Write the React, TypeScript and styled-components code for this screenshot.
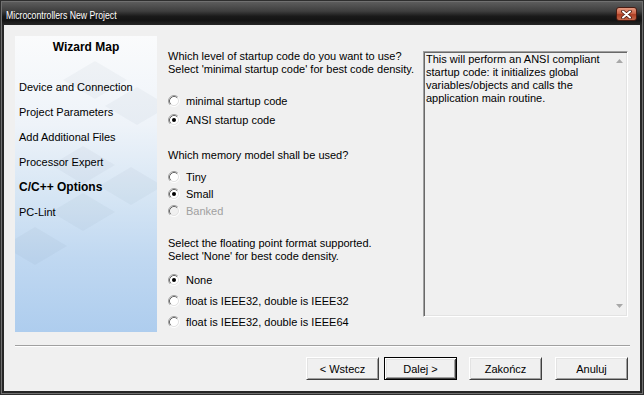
import React from "react";
import styled, { createGlobalStyle } from "styled-components";

const Global = createGlobalStyle`
  html, body { margin: 0; padding: 0; background: #2a2a2a; }
  body { font-family: "Liberation Sans", Arial, sans-serif; font-size: 11px; color: #000; }
  * { box-sizing: border-box; }
`;

const Window = styled.div`
  width: 644px;
  height: 395px;
  border: 1px solid #2e2e2e;
  background: #2e2e2e;
`;

const Frame = styled.div`
  width: 100%;
  height: 100%;
  border: 1px solid #707070;
  background: #262626;
  display: flex;
  flex-direction: column;
`;

const TitleBar = styled.div`
  height: 23px;
  flex-shrink: 0;
  display: flex;
  align-items: center;
  justify-content: space-between;
  padding: 0 5px 0 4px;
  background: linear-gradient(to bottom, #5c5c5c 0%, #3e3e3e 40%, #1a1a1a 62%, #141414 80%, #262626 100%);
`;

const TitleText = styled.span`
  color: #fff;
  font-family: "Liberation Sans", Arial, sans-serif;
  font-size: 11px;
  margin-top: 3px;
  transform: scaleX(0.79);
  transform-origin: left center;
  white-space: nowrap;
`;

const CloseButton = styled.div`
  width: 21px;
  height: 14px;
  margin-top: 1px;
  border: 1px solid #4a1c12;
  border-radius: 3px;
  background: linear-gradient(to bottom, #e59a80 0%, #cc6448 45%, #ad3f25 55%, #c4684b 100%);
  display: flex;
  align-items: center;
  justify-content: center;
`;

const Client = styled.div`
  flex: 1;
  margin: 0 2px 2px;
  background: #f0f0f0;
  display: flex;
  flex-direction: column;
`;

const Body = styled.div`
  display: flex;
  padding: 11px 0 0 11px;
  height: 307px;
`;

const WizardPanel = styled.div`
  position: relative;
  width: 142px;
  height: 296px;
  flex-shrink: 0;
  overflow: hidden;
  padding-top: 4px;
  background: linear-gradient(to bottom, #fafbfc 0%, #eef3f9 30%, #d5e5f4 55%, #c0d8f1 75%, #aecdee 100%);
`;

const Watermark = styled.svg`
  position: absolute;
  left: 0;
  top: 0;
  z-index: 0;
`;

const MapTitle = styled.div`
  position: relative;
  z-index: 1;
  text-align: center;
  font-size: 12px;
  font-weight: bold;
  line-height: 14px;
`;

const MapList = styled.div`
  position: relative;
  z-index: 1;
  margin-top: 21px;
  display: flex;
  flex-direction: column;
`;

const MapItem = styled.div<{ $active?: boolean }>`
  height: 25px;
  line-height: 25px;
  padding-left: 4px;
  font-size: ${(p) => (p.$active ? "12px" : "11px")};
  font-weight: ${(p) => (p.$active ? "bold" : "normal")};
  white-space: nowrap;
`;

const Options = styled.div`
  width: 255px;
  margin-left: 11px;
  padding-top: 14px;
  display: flex;
  flex-direction: column;
`;

const Question = styled.div<{ $mt?: number }>`
  line-height: 13px;
  margin-top: ${(p) => p.$mt ?? 0}px;
  white-space: nowrap;
`;

const Group = styled.div<{ $mt: number }>`
  margin-top: ${(p) => p.$mt}px;
  display: flex;
  flex-direction: column;
`;

const RadioRow = styled.div<{ $h: number; $disabled?: boolean }>`
  height: ${(p) => p.$h}px;
  display: flex;
  align-items: center;
  gap: 6px;
  color: ${(p) => (p.$disabled ? "#a0a0a0" : "#000")};
  white-space: nowrap;
`;

const RadioSvg = styled.svg`
  flex-shrink: 0;
`;

const InfoBox = styled.div`
  margin-top: 15px;
  width: 205px;
  height: 266px;
  border: 1px solid;
  border-color: #a0a0a0 #ffffff #ffffff #a0a0a0;
  box-shadow: inset 1px 1px 0 #696969, inset -1px -1px 0 #e3e3e3;
  padding: 1px;
  display: flex;
`;

const InfoText = styled.div`
  flex: 1;
  padding-left: 1px;
  line-height: 13px;
`;

const InfoLine = styled.div`
  white-space: nowrap;
`;

const ScrollBar = styled.div`
  width: 12px;
  margin-right: 1px;
  display: flex;
  flex-direction: column;
  justify-content: space-between;
  align-items: center;
  padding: 6px 0 7px;
`;

const Separator = styled.div`
  margin: 13px 10px 0 11px;
  border-top: 1px solid #a0a0a0;
  border-bottom: 1px solid #ffffff;
`;

const ButtonRow = styled.div`
  display: flex;
  justify-content: flex-end;
  margin-top: 10px;
  padding-right: 12px;
`;

const Button = styled.div<{ $default?: boolean; $ml?: number }>`
  width: 73px;
  height: 23px;
  margin-left: ${(p) => p.$ml ?? 0}px;
  display: flex;
  align-items: center;
  justify-content: center;
  background: #f0f0f0;
  font-size: 11px;
  white-space: nowrap;
  border: 1px solid;
  border-color: ${(p) => (p.$default ? "#000 #000 #000 #000" : "#fff #404040 #404040 #fff")};
  box-shadow: ${(p) =>
    p.$default
      ? "inset 1px 1px 0 #fff, inset -1px -1px 0 #404040, inset 2px 2px 0 #e3e3e3, inset -2px -2px 0 #a0a0a0"
      : "inset 1px 1px 0 #e3e3e3, inset -1px -1px 0 #a0a0a0"};
`;

const Radio: React.FC<{ checked?: boolean; disabled?: boolean }> = ({ checked, disabled }) => (
  <RadioSvg width="12" height="12" viewBox="0 0 12 12">
    <circle cx="6" cy="6" r="4.2" fill={disabled ? "#f0f0f0" : "#ffffff"} />
    <path d="M2.11 9.89A5.5 5.5 0 0 1 9.89 2.11" stroke="#a0a0a0" fill="none" />
    <path d="M9.89 2.11A5.5 5.5 0 0 1 2.11 9.89" stroke="#ffffff" fill="none" />
    <path d="M2.82 9.18A4.5 4.5 0 0 1 9.18 2.82" stroke="#696969" fill="none" />
    <path d="M9.18 2.82A4.5 4.5 0 0 1 2.82 9.18" stroke="#e3e3e3" fill="none" />
    {checked && <circle cx="6" cy="6" r="2" fill={disabled ? "#a0a0a0" : "#000"} />}
  </RadioSvg>
);

const Arrow: React.FC<{ up?: boolean }> = ({ up }) => (
  <svg width="7" height="4" viewBox="0 0 7 4">
    <polygon points={up ? "0,4 7,4 3.5,0" : "0,0 7,0 3.5,4"} fill="#a8a8a8" />
  </svg>
);

const rhombi: [number, number][] = [
  [80, 44],
  [122, 70],
  [68, 129],
  [116, 150],
  [68, 176],
  [20, 210],
];

const mapItems = [
  "Device and Connection",
  "Project Parameters",
  "Add Additional Files",
  "Processor Expert",
  "C/C++ Options",
  "PC-Lint",
];

export default function App() {
  return (
    <>
      <Global />
      <Window>
        <Frame>
          <TitleBar>
            <TitleText>Microcontrollers New Project</TitleText>
            <CloseButton>
              <svg width="11" height="9" viewBox="0 0 11 9">
                <path d="M2 1.5L9 7.5M9 1.5L2 7.5" stroke="#4a1c12" strokeWidth="3.6" strokeLinecap="round" />
                <path d="M2 1.5L9 7.5M9 1.5L2 7.5" stroke="#ffffff" strokeWidth="2" strokeLinecap="round" />
              </svg>
            </CloseButton>
          </TitleBar>
          <Client>
            <Body>
              <WizardPanel>
                <Watermark width="142" height="296" viewBox="0 0 142 296">
                  {rhombi.map(([cx, cy], i) => (
                    <polygon
                      key={i}
                      points={`${cx - 32},${cy} ${cx},${cy - 19} ${cx + 32},${cy} ${cx},${cy + 19}`}
                      fill="rgba(80,95,120,0.045)"
                    />
                  ))}
                </Watermark>
                <MapTitle>Wizard Map</MapTitle>
                <MapList>
                  {mapItems.map((m) => (
                    <MapItem key={m} $active={m === "C/C++ Options"}>
                      {m}
                    </MapItem>
                  ))}
                </MapList>
              </WizardPanel>
              <Options>
                <Question>
                  Which level of startup code do you want to use?
                  <br />
                  Select 'minimal startup code' for best code density.
                </Question>
                <Group $mt={15}>
                  <RadioRow $h={19}>
                    <Radio />
                    minimal startup code
                  </RadioRow>
                  <RadioRow $h={19}>
                    <Radio checked />
                    ANSI startup code
                  </RadioRow>
                </Group>
                <Question $mt={20}>Which memory model shall be used?</Question>
                <Group $mt={6}>
                  <RadioRow $h={17}>
                    <Radio />
                    Tiny
                  </RadioRow>
                  <RadioRow $h={17}>
                    <Radio checked />
                    Small
                  </RadioRow>
                  <RadioRow $h={17} $disabled>
                    <Radio disabled />
                    Banked
                  </RadioRow>
                </Group>
                <Question $mt={18}>
                  Select the floating point format supported.
                  <br />
                  Select 'None' for best code density.
                </Question>
                <Group $mt={6}>
                  <RadioRow $h={21}>
                    <Radio checked />
                    None
                  </RadioRow>
                  <RadioRow $h={21}>
                    <Radio />
                    float is IEEE32, double is IEEE32
                  </RadioRow>
                  <RadioRow $h={21}>
                    <Radio />
                    float is IEEE32, double is IEEE64
                  </RadioRow>
                </Group>
              </Options>
              <InfoBox>
                <InfoText>
                  <InfoLine>This will perform an ANSI compliant</InfoLine>
                  <InfoLine>startup code: it initializes global</InfoLine>
                  <InfoLine>variables/objects and calls the</InfoLine>
                  <InfoLine>application main routine.</InfoLine>
                </InfoText>
                <ScrollBar>
                  <Arrow up />
                  <Arrow />
                </ScrollBar>
              </InfoBox>
            </Body>
            <Separator />
            <ButtonRow>
              <Button>&lt; Wstecz</Button>
              <Button $default $ml={5}>
                Dalej &gt;
              </Button>
              <Button $ml={12}>Zakończ</Button>
              <Button $ml={13}>Anuluj</Button>
            </ButtonRow>
          </Client>
        </Frame>
      </Window>
    </>
  );
}
